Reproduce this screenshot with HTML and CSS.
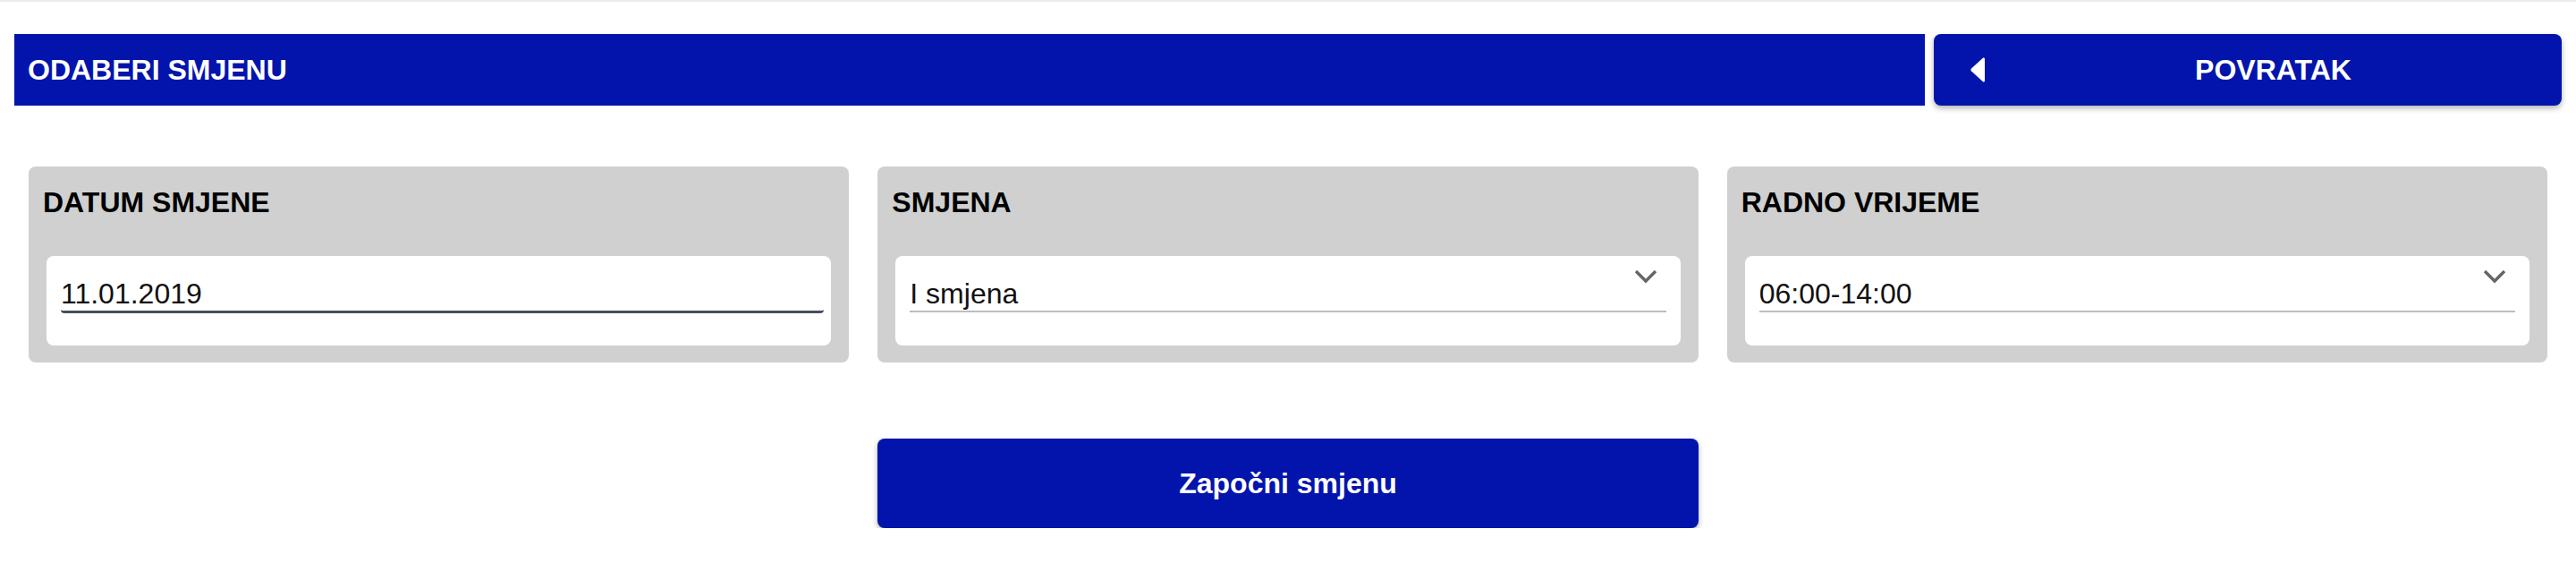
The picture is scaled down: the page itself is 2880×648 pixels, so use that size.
FILE: index.html
```html
<!DOCTYPE html>
<html lang="hr">
<head>
<meta charset="utf-8">
<title>Odaberi smjenu</title>
<link rel="stylesheet" href="styles.css">
</head>
<body>
<div class="topstrip"></div>
<header class="header">
  <div class="title-bar">ODABERI SMJENU</div>
  <button class="back-btn" type="button">
    <svg class="caret" width="16" height="28" viewBox="0 0 16 28" aria-hidden="true">
      <path d="M14.2 0.6 Q16 0 16 2 L16 26 Q16 28 14.2 27.4 L0.8 15.2 Q0 14 0.8 12.8 Z" fill="#fff"/>
    </svg>
    <span class="back-label">POVRATAK</span>
  </button>
</header>

<main>
  <section class="cards">
    <div class="card">
      <div class="card-title">DATUM SMJENE</div>
      <div class="field-box">
        <div class="field field-date">11.01.2019</div>
      </div>
    </div>
    <div class="card">
      <div class="card-title">SMJENA</div>
      <div class="field-box">
        <div class="field field-select">I smjena
          <svg class="chevron" width="26" height="16" viewBox="0 0 26 16" aria-hidden="true">
            <path d="M2 2 L13 13 L24 2" fill="none" stroke="#666666" stroke-width="3.4"/>
          </svg>
        </div>
      </div>
    </div>
    <div class="card">
      <div class="card-title">RADNO VRIJEME</div>
      <div class="field-box">
        <div class="field field-select">06:00-14:00
          <svg class="chevron" width="26" height="16" viewBox="0 0 26 16" aria-hidden="true">
            <path d="M2 2 L13 13 L24 2" fill="none" stroke="#666666" stroke-width="3.4"/>
          </svg>
        </div>
      </div>
    </div>
  </section>

  <section class="actions">
    <button class="start-btn" type="button">Započni smjenu</button>
  </section>
</main>
</body>
</html>
```

FILE: styles.css
```css
* {
  box-sizing: border-box;
}

html, body {
  margin: 0;
  padding: 0;
  background: #ffffff;
  font-family: "Liberation Sans", Arial, sans-serif;
}

.topstrip {
  height: 2px;
  background: #ececec;
}

.header {
  display: flex;
  padding: 36px 16px 0 16px;
}

.title-bar {
  flex: 0 0 75%;
  height: 80px;
  background: #0314ac;
  color: #ffffff;
  font-weight: bold;
  font-size: 32px;
  display: flex;
  align-items: center;
  padding-left: 15px;
}

.back-btn {
  flex: 1;
  margin-left: 10px;
  height: 80px;
  border: none;
  border-radius: 8px;
  background: #0314ac;
  color: #ffffff;
  box-shadow: 0 3px 6px rgba(0, 0, 0, 0.3);
  display: flex;
  align-items: center;
  padding: 0 0 0 41px;
  font-family: inherit;
  font-weight: bold;
  font-size: 32px;
}

.caret {
  flex: 0 0 auto;
  display: block;
}

.back-label {
  flex: 1;
  text-align: center;
}

.cards {
  display: grid;
  grid-template-columns: repeat(3, 1fr);
  gap: 32px;
  padding: 68px 32px 0 32px;
}

.card {
  height: 219px;
  background: #cfd0cf;
  border-radius: 8px;
  padding: 20px 20px 19px 20px;
}

.card-title {
  font-weight: bold;
  font-size: 32px;
  line-height: 40px;
  color: #000000;
  margin-left: -4px;
  margin-bottom: 40px;
}

.field-box {
  height: 100px;
  background: #ffffff;
  border-radius: 8px;
  padding: 12px 16px 0 16px;
}

.field {
  position: relative;
  padding-top: 11px;
  font-size: 32px;
  line-height: 38px;
  color: #111111;
  border-bottom: 2px solid #bdbdbd;
}

.field-date {
  margin-right: -8px;
  border-bottom: 3px solid #474d5c;
  border-radius: 0 0 4px 4px;
}

.chevron {
  position: absolute;
  top: 3px;
  right: 10px;
  display: block;
}

.actions {
  display: grid;
  grid-template-columns: repeat(3, 1fr);
  gap: 32px;
  padding: 85px 32px 0 32px;
}

.start-btn {
  grid-column: 2;
  height: 100px;
  border: none;
  border-radius: 8px;
  background: #0314ac;
  color: #ffffff;
  box-shadow: 0 3px 6px rgba(0, 0, 0, 0.3);
  font-family: inherit;
  font-weight: bold;
  font-size: 32px;
}
```
